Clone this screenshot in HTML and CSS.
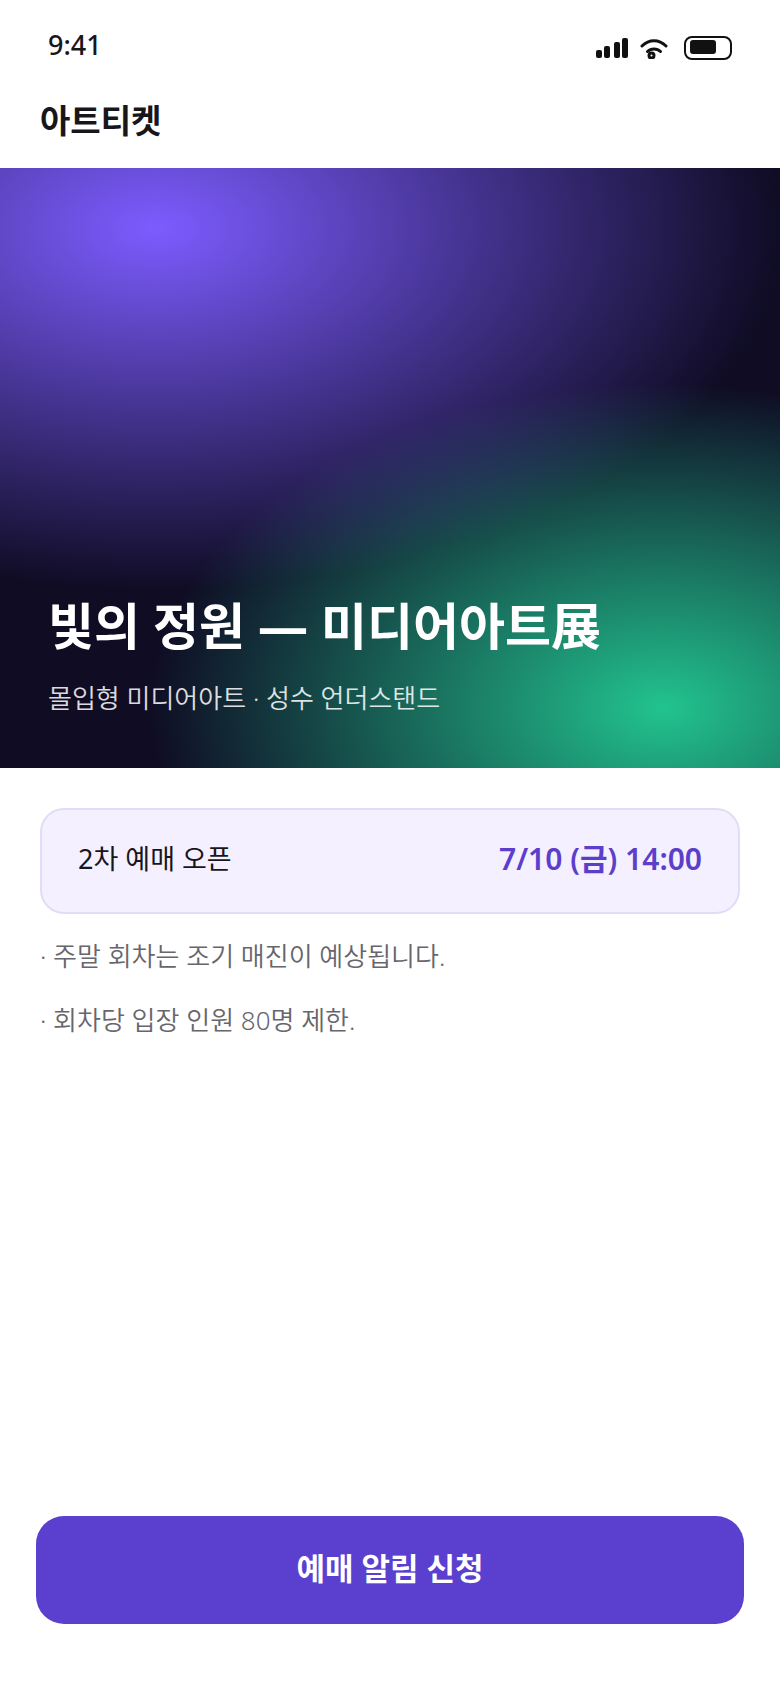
FILE: index.html
```html
<!DOCTYPE html>
<html lang="ko">

<head>
    <meta charset="UTF-8">
    <meta name="viewport" content="width=device-width, initial-scale=1.0">
    <title>아트티켓</title>
    <link rel="stylesheet" href="styles.css">
</head>

<body>
    <div class="status-bar">
        <span class="time">9:41</span>
        <div class="status-icons">
            <svg class="signal" width="32" height="20" viewBox="0 0 32 20" fill="currentColor" aria-hidden="true">
                <rect x="0" y="12" width="6" height="8" rx="2" />
                <rect x="8" y="8" width="6" height="12" rx="2" />
                <rect x="18" y="4" width="6" height="16" rx="2" />
                <rect x="26" y="0" width="6" height="20" rx="2" />
            </svg>
            <svg class="wifi" width="28" height="22" viewBox="0 0 28 22" fill="none" stroke="currentColor" stroke-width="3" stroke-linecap="round" aria-hidden="true">
                <path d="M2 9C9 2 19 2 26 9" />
                <path d="M7.500 14.500C11 11 17 11 20.500 14.500" />
                <circle cx="11.500" cy="18.500" r="2.500" />
            </svg>
            <svg class="battery" width="48" height="24" viewBox="0 0 48 24" aria-hidden="true">
                <rect x="1" y="1" width="46" height="22" rx="7" fill="none" stroke="currentColor" stroke-width="2" />
                <rect x="6" y="4" width="26" height="14" rx="3" fill="currentColor" />
            </svg>
        </div>
    </div>
    <header class="app-header">아트티켓</header>
    <section class="hero">
        <h1>빛의 정원 — 미디어아트展</h1>
        <p>몰입형 미디어아트 · 성수 언더스탠드</p>
    </section>
    <main class="content">
        <div class="open-card">
            <span>2차 예매 오픈</span>
            <strong>7/10 (금) 14:00</strong>
        </div>
        <p class="note">· 주말 회차는 조기 매진이 예상됩니다.</p>
        <p class="note">· 회차당 입장 인원 80명 제한.</p>
    </main>
    <footer class="footer">
        <button class="button" type="button">예매 알림 신청</button>
    </footer>
</body>

</html>
```
FILE: styles.css
```css
* {
    box-sizing: border-box;
}
body {
    font-family: "Noto Sans", "Noto Sans CJK KR", sans-serif;
    margin: 0;
    min-height: 100vh;
    display: flex;
    flex-direction: column;
    color: #17171b;
    background-color: #fff;
}
.status-bar {
    display: flex;
    justify-content: space-between;
    align-items: center;
    height: 88px;
    padding: 0 48px;
}
.time {
    font-size: 27px;
    font-weight: 500;
}
.status-icons {
    display: flex;
    align-items: center;
    gap: 12px;
    padding-top: 8px;
    color: #111;
}
.battery {
    margin-left: 4px;
}
.app-header {
    height: 80px;
    padding: 9px 40px;
    font-size: 33px;
    font-weight: 700;
    line-height: 48px;
}
.hero {
    display: flex;
    flex-direction: column;
    justify-content: flex-end;
    min-height: 600px;
    padding: 48px 48px 50px;
    color: #fff;
    background:
        radial-gradient(120% 90% at 20% 10%, #7c5cff 0%, transparent 67%),
        radial-gradient(110% 90% at 85% 90%, #22c38e 0%, transparent 60%),
        #0f0c24;
}
.hero h1 {
    margin: 0;
    font-size: 50px;
    font-weight: 700;
    line-height: 64px;
}
.hero p {
    margin: 20px 0 0;
    font-size: 26px;
    font-weight: 350;
    line-height: 40px;
    opacity: 0.85;
}
.content {
    flex: 1;
    padding: 40px;
}
.open-card {
    display: flex;
    justify-content: space-between;
    align-items: center;
    padding: 26px 36px 30px;
    border: 2px solid #e2dcf5;
    border-radius: 24px;
    background-color: #f5f0ff;
    font-size: 27px;
    line-height: 46px;
    margin-bottom: 20px;
}
.open-card strong {
    font-size: 30px;
    font-weight: 600;
    color: #5b3fcb;
}
.note {
    margin: 0 0 20px;
    font-size: 26px;
    font-weight: 350;
    line-height: 44px;
    color: #66666c;
}
.footer {
    padding: 0 36px 64px;
}
.button {
    display: block;
    width: 100%;
    padding: 28px 32px 32px;
    font-family: inherit;
    font-size: 31px;
    font-weight: 700;
    line-height: 48px;
    color: #fff;
    background-color: #5b3fcf;
    border: none;
    border-radius: 28px;
    cursor: pointer;
}
```
